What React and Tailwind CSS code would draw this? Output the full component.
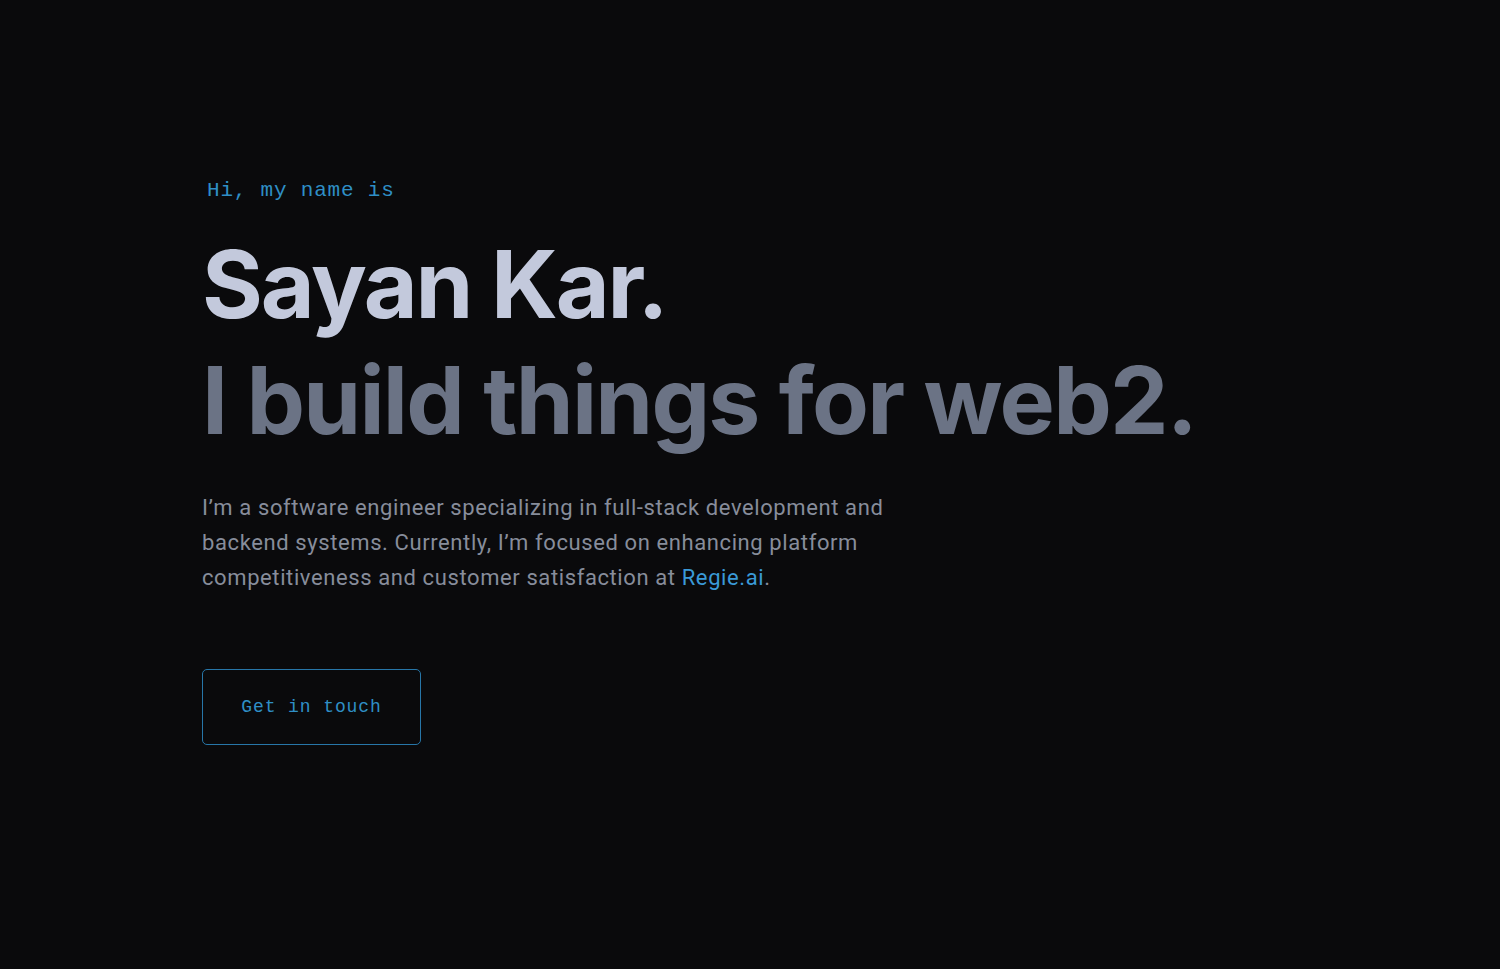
export default function App() {
  return (
    <div className="min-h-[969px] w-full bg-[#0a0a0c] flex flex-col">
      <div className="pl-[202px] pt-[176px] flex flex-col items-start">
        <p className="ml-[5px] text-[21px] leading-[30px] tracking-[0.8px] text-[#2f8fc6] font-['Liberation_Mono',monospace]">
          Hi, my name is
        </p>
        <h1 className="mt-[20px] text-[93px] leading-[116px] font-bold tracking-[-2.2px] text-[#c3c9dc] font-['Inter',sans-serif]">
          Sayan Kar.
        </h1>
        <h2 className="text-[93px] leading-[116px] font-bold tracking-[-1.8px] text-[#6b7385] font-['Inter',sans-serif]">
          I build things for web2.
        </h2>
        <p className="mt-[32px] w-[700px] text-[22px] leading-[35px] tracking-[0.6px] text-[#878d9b] font-['Roboto',sans-serif]">
          I’m a software engineer specializing in full-stack development and backend systems. Currently, I’m focused on enhancing platform competitiveness and customer satisfaction at{" "}
          <a className="text-[#3a9ad8]">Regie.ai</a>.
        </p>
        <button className="mt-[74px] w-[219px] h-[76px] rounded-[5px] border-[1.5px] border-[#2776a8] text-[18px] tracking-[0.9px] text-[#2f8fc6] font-['Liberation_Mono',monospace]">
          Get in touch
        </button>
      </div>
    </div>
  );
}
